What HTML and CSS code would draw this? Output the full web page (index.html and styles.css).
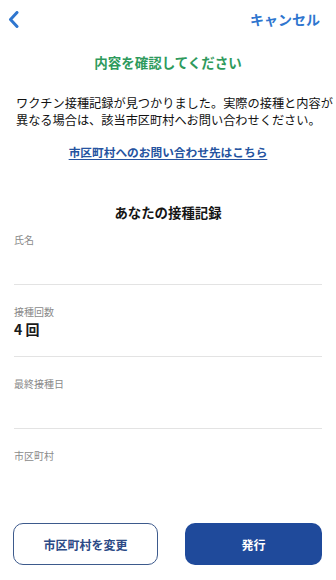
FILE: index.html
```html
<!DOCTYPE html>
<html lang="ja">
<head>
<meta charset="utf-8">
<title>内容を確認してください</title>
<link rel="stylesheet" href="styles.css">
</head>
<body>
<div class="page">
  <header class="nav">
    <span class="back" aria-label="戻る">
      <svg width="11" height="17" viewBox="0 0 11 17"><polyline points="9,1.5 2.5,8.5 9,15.5" fill="none" stroke="#2f76cf" stroke-width="3" stroke-linecap="round" stroke-linejoin="round"/></svg>
    </span>
    <span class="cancel">キャンセル</span>
  </header>

  <h1 class="title">内容を確認してください</h1>
  <p class="lead">ワクチン接種記録が見つかりました。実際の接種と内容が<br>異なる場合は、該当市区町村へお問い合わせください。</p>
  <p class="linkrow"><a class="link" href="#">市区町村へのお問い合わせ先はこちら</a></p>

  <h2 class="section">あなたの接種記録</h2>
  <div class="fields">
    <div class="field">
      <div class="label">氏名</div>
      <div class="value"></div>
    </div>
    <div class="field">
      <div class="label">接種回数</div>
      <div class="value">4 回</div>
    </div>
    <div class="field">
      <div class="label">最終接種日</div>
      <div class="value"></div>
    </div>
    <div class="field last">
      <div class="label">市区町村</div>
      <div class="value"></div>
    </div>
  </div>

  <footer class="actions">
    <button class="btn outline">市区町村を変更</button>
    <button class="btn solid">発行</button>
  </footer>
</div>
</body>
</html>
```

FILE: styles.css
```css
* { box-sizing: border-box; }
html, body { margin: 0; padding: 0; background: #fff; }
body {
  font-family: "Noto Sans CJK JP", "Noto Sans", sans-serif;
  color: #111;
}
.page {
  height: 580px;
  display: flex;
  flex-direction: column;
  overflow: hidden;
}
.nav {
  height: 38px;
  display: flex;
  align-items: center;
  justify-content: space-between;
  padding: 0 16px 0 8px;
}
.back { display: flex; align-items: center; }
.cancel {
  color: #2f76cf;
  font-size: 14px;
  font-weight: 700;
  line-height: 20px;
}
.title {
  margin: 13px 0 0;
  text-align: center;
  color: #2e9a5c;
  font-size: 13.5px;
  font-weight: 700;
  line-height: 22px;
}
.lead {
  margin: 22px 0 0;
  padding: 0 4px 0 16px;
  font-size: 12.2px;
  line-height: 17px;
  color: #111;
  white-space: nowrap;
}
.linkrow {
  margin: 12px 0 0;
  text-align: center;
  line-height: 18px;
}
.link {
  color: #2553a0;
  font-size: 11.7px;
  font-weight: 700;
  text-decoration: underline;
  text-underline-offset: 2px;
}
.section {
  margin: 40px 0 0;
  text-align: center;
  font-size: 13.4px;
  font-weight: 700;
  line-height: 22px;
  color: #151515;
}
.fields { padding: 0 14px; }
.field {
  padding: 10px 0 17px;
  border-bottom: 1px solid #e3e3e3;
}
.field + .field { padding-top: 20px; }
.field.last { border-bottom: none; }
.label {
  font-size: 10px;
  line-height: 14px;
  color: #8a8a8a;
}
.value {
  height: 20px;
  font-size: 14px;
  font-weight: 700;
  line-height: 20px;
  color: #1a1a1a;
}
.actions {
  margin-top: auto;
  display: grid;
  grid-template-columns: 145px 137px;
  column-gap: 27px;
  padding: 0 0 15px 13px;
}
.btn {
  height: 42px;
  border-radius: 10px;
  font-family: inherit;
  font-size: 12px;
  font-weight: 700;
  padding: 0;
}
.btn.outline {
  background: #fff;
  border: 1.3px solid #3d5a8c;
  color: #2c4a86;
}
.btn.solid {
  background: #1f4a9b;
  border: none;
  color: #fff;
}
```
